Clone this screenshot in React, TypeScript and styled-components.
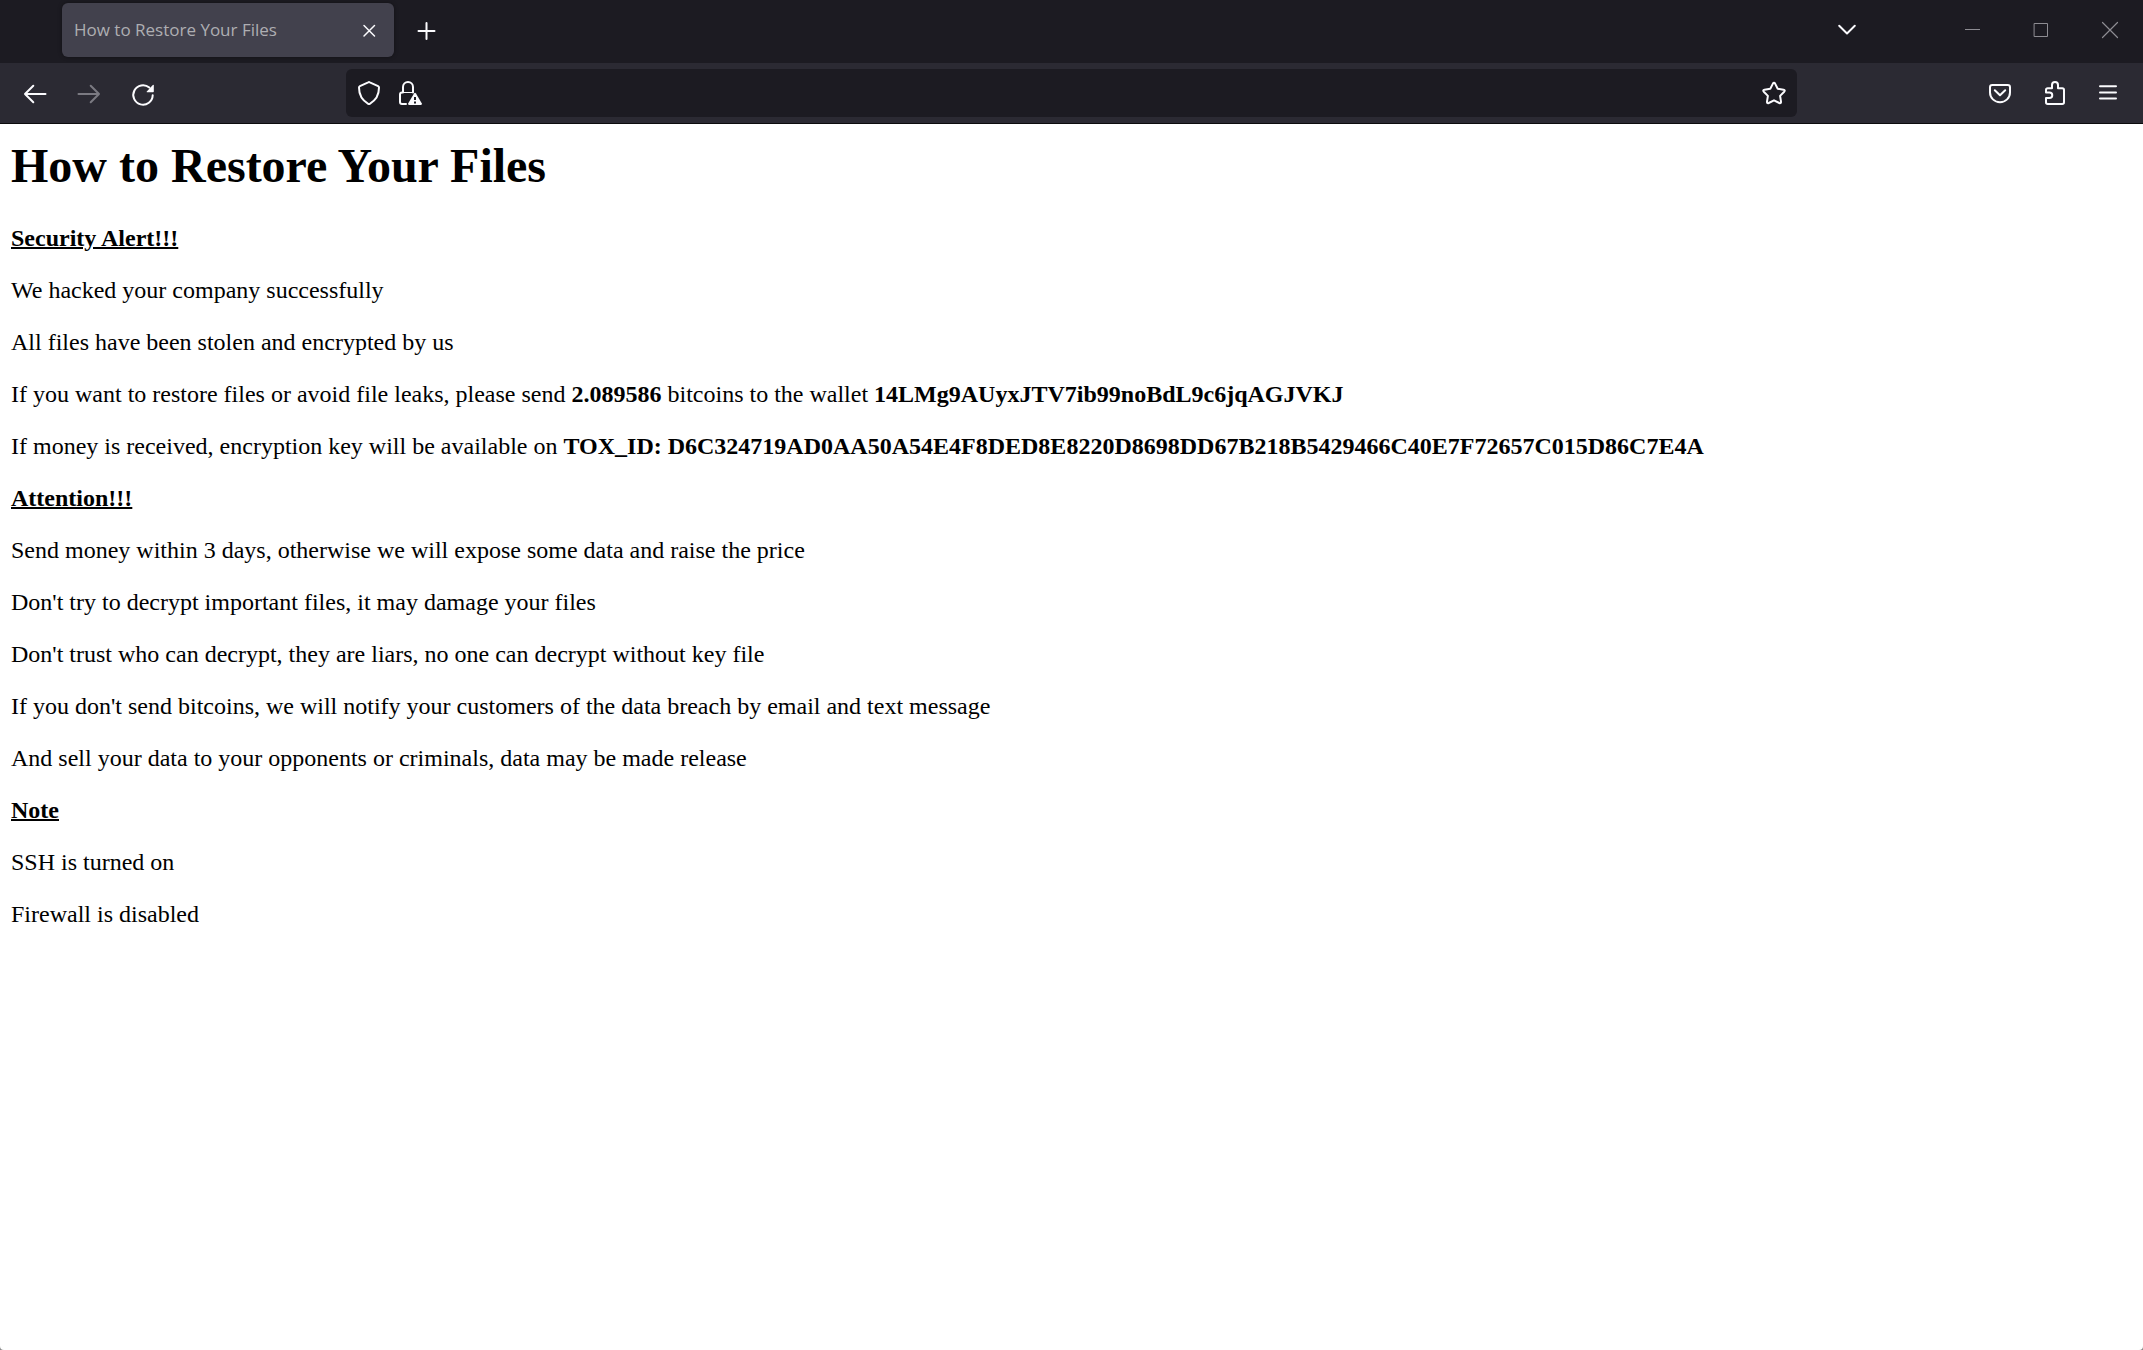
import React from "react";
import styled, { createGlobalStyle } from "styled-components";

const GlobalStyle = createGlobalStyle`
  html {
    background: #8a8a8a;
  }
  body {
    margin: 0;
  }
  *, *::before, *::after {
    box-sizing: border-box;
  }
`;

const Window = styled.div`
  display: flex;
  flex-direction: column;
  min-height: 100vh;
  background: #ffffff;
  border-radius: 0 0 4px 4px;
  overflow: hidden;
`;

const TabStrip = styled.header`
  display: flex;
  align-items: center;
  padding: 3px 0 6px 62px;
  background: #1c1b22;
`;

const Tab = styled.div`
  display: flex;
  align-items: center;
  flex: 0 1 332px;
  min-width: 0;
  height: 54px;
  padding: 0 6px 0 12px;
  border-radius: 6px;
  background: #42414d;
  box-shadow: 0 0 4px rgba(0, 0, 0, 0.4);
`;

const TabTitle = styled.span`
  flex: 1;
  min-width: 0;
  overflow: hidden;
  white-space: nowrap;
  font: 17px/28px "Open Sans", "Noto Sans", sans-serif;
  color: #aeaeb2;
`;

const IconButton = styled.button<{ $width: number; $color?: string }>`
  display: flex;
  flex: none;
  align-items: center;
  justify-content: center;
  width: ${(p) => p.$width}px;
  height: 36px;
  padding: 0;
  border: 0;
  background: transparent;
  color: ${(p) => p.$color ?? "#fbfbfe"};
`;

const Icon = styled.svg`
  display: block;
  width: 24px;
  height: 24px;
  overflow: visible;
  fill: none;
  stroke: currentColor;
  stroke-width: 2;
  stroke-linecap: round;
  stroke-linejoin: round;
`;

const NewTab = styled.div`
  flex: 1;
  padding-left: 6px;
`;

const WindowControls = styled.div`
  display: flex;
  padding-left: 65px;
`;

const Toolbar = styled.nav`
  display: flex;
  align-items: center;
  padding: 6px 8px;
  border-bottom: 1px solid #0c0c0d;
  background: #2b2a33;
`;

const Spacer = styled.div`
  flex: 0 1 176px;
`;

const AddressBar = styled.div`
  display: flex;
  flex: 1;
  align-items: center;
  min-width: 0;
  height: 48px;
  padding: 0 2px;
  border-radius: 6px;
  background: #1c1b22;
`;

const AddressInput = styled.input`
  flex: 1;
  min-width: 0;
  height: 36px;
  padding: 0 8px;
  border: 0;
  outline: 0;
  background: transparent;
  font: 17px/28px "Open Sans", "Noto Sans", sans-serif;
  color: #fbfbfe;
`;

const Page = styled.main`
  flex: 1;
  padding: 14px 11px 24px;
  font: 24px/28px "Liberation Serif", "Times New Roman", serif;
  color: #000000;
`;

const Title = styled.h1`
  margin: 0 0 30px;
  font-size: 48px;
  line-height: 56px;
  font-weight: bold;
`;

const Line = styled.p`
  margin: 0 0 24px;
  overflow-wrap: anywhere;
`;

const SectionTitle = styled.h2`
  margin: 0 0 24px;
  font-size: 24px;
  line-height: 28px;
  font-weight: bold;
  text-decoration: underline;
  text-decoration-thickness: 2px;
`;

const DIM = "#8d8c92";

export default function App() {
  return (
    <>
      <GlobalStyle />
      <Window>
        <TabStrip>
          <Tab>
            <TabTitle>How to Restore Your Files</TabTitle>
            <IconButton $width={36} aria-label="Close tab">
              <Icon>
                <path d="M6 7.5l10.500 10.500M16.500 7.500l-10.500 10.500" strokeWidth="1.500" />
              </Icon>
            </IconButton>
          </Tab>
          <NewTab>
            <IconButton $width={54} aria-label="New tab">
              <Icon>
                <path d="M11.500 5v16M3.500 13h16" />
              </Icon>
            </IconButton>
          </NewTab>
          <IconButton $width={54} aria-label="List all tabs">
            <Icon>
              <path d="M4.200 7.800l7.800 7.700 7.800-7.700" />
            </Icon>
          </IconButton>
          <WindowControls>
            <IconButton $width={68} $color={DIM} aria-label="Minimize">
              <Icon>
                <path d="M4 11.500h15" strokeWidth="1" strokeLinecap="butt" />
              </Icon>
            </IconButton>
            <IconButton $width={68} $color={DIM} aria-label="Maximize">
              <Icon>
                <path d="M5.500 5.500h13v13h-13z" strokeWidth="1" strokeLinejoin="miter" />
              </Icon>
            </IconButton>
            <IconButton $width={68} $color={DIM} aria-label="Close window">
              <Icon>
                <path d="M5.500 4.500l15 15M20.500 4.500l-15 15" strokeWidth="1.200" />
              </Icon>
            </IconButton>
          </WindowControls>
        </TabStrip>

        <Toolbar aria-label="Navigation">
          <IconButton $width={54} aria-label="Back">
            <Icon>
              <path d="M10.300 4.800L2 13l8.300 8.200M2 13h20.500" />
            </Icon>
          </IconButton>
          <IconButton $width={54} $color="#7b7a82" aria-label="Forward" disabled>
            <Icon>
              <path d="M13.700 4.800L22 13l-8.300 8.200M22 13H1.500" />
            </Icon>
          </IconButton>
          <IconButton $width={54} aria-label="Reload">
            <Icon>
              <path d="M21.700 14.200a9.700 9.700 0 1 1-3.400-7.600" />
              <path
                d="M22.800 4.300v6.200q0 .7-.7.7h-6q-1 0-.3-.8l6-6.400q.8-.7 1 .3z"
                fill="currentColor"
                stroke="none"
              />
            </Icon>
          </IconButton>
          <Spacer />
          <AddressBar>
            <IconButton $width={42} aria-label="Tracking protection">
              <Icon>
                <path d="M11.200 1.300q.8-.4 1.600 0l8.300 3.900q.9.4.9 1.400c0 7.600-3.800 13.200-9.200 16.200q-.8.4-1.600 0C5.800 19.800 2 14.200 2 6.600q0-1 .9-1.400z" />
              </Icon>
            </IconButton>
            <IconButton $width={42} aria-label="Connection is not secure">
              <Icon>
                <path d="M4 11.500V6a5 5 0 0 1 10 0v5.500" />
                <path d="M3 11.500h11" strokeWidth="1.200" />
                <path d="M3 11.500q-2 0-2 2V21q0 2 2 2h4" />
                <path
                  d="M15 12.500q1-1.600 2 0l5.700 9.700q.8 1.600-.9 1.800H10.200q-1.700-.2-.9-1.800z"
                  fill="currentColor"
                  stroke="none"
                />
                <path d="M16 16v3M16 20.500v2" stroke="#1c1b22" strokeWidth="2" strokeLinecap="butt" />
              </Icon>
            </IconButton>
            <AddressInput type="text" aria-label="Search or enter address" />
            <IconButton $width={42} aria-label="Bookmark this page">
              <Icon>
                <path d="M10.900 2.600q1.100-1.900 2.200 0l2.600 5.200 5.800.9q2 .5.7 2l-4.100 4.200.9 5.800q.1 2-1.700 1.300L12 19.300 6.700 22q-1.800.7-1.700-1.300l.9-5.800-4.100-4.200q-1.300-1.500.7-2l5.800-.9z" />
              </Icon>
            </IconButton>
          </AddressBar>
          <Spacer />
          <IconButton $width={54} aria-label="Save to Pocket">
            <Icon>
              <path d="M4.300 4h15.400q2.300 0 2.300 2.300V11.500a10 9.700 0 0 1-20 0V6.300Q2 4 4.300 4z" />
              <path d="M6.800 9.300l5.200 5 5.200-5" />
            </Icon>
          </IconButton>
          <IconButton $width={54} aria-label="Extensions">
            <Icon>
              <path d="M4 11.500V9q0-1.700 1.700-1.700H10V4a3 3 0 0 1 6 0v3.300h4.300q1.700 0 1.700 1.700v12.300q0 1.700-1.700 1.700H5.700Q4 23 4 21.300V17h3.500a2.700 2.700 0 0 0 0-5.500z" />
            </Icon>
          </IconButton>
          <IconButton $width={54} aria-label="Open application menu">
            <Icon>
              <path d="M4 5.300h16M4 11.500h16M4 17.600h16" />
            </Icon>
          </IconButton>
        </Toolbar>

        <Page>
          <Title>How to Restore Your Files</Title>
          <SectionTitle>Security Alert!!!</SectionTitle>
          <Line>We hacked your company successfully</Line>
          <Line>All files have been stolen and encrypted by us</Line>
          <Line>
            If you want to restore files or avoid file leaks, please send <b>2.089586</b> bitcoins to the
            wallet <b>14LMg9AUyxJTV7ib99noBdL9c6jqAGJVKJ</b>
          </Line>
          <Line>
            If money is received, encryption key will be available on{" "}
            <b>TOX_ID: D6C324719AD0AA50A54E4F8DED8E8220D8698DD67B218B5429466C40E7F72657C015D86C7E4A</b>
          </Line>
          <SectionTitle>Attention!!!</SectionTitle>
          <Line>Send money within 3 days, otherwise we will expose some data and raise the price</Line>
          <Line>Don't try to decrypt important files, it may damage your files</Line>
          <Line>Don't trust who can decrypt, they are liars, no one can decrypt without key file</Line>
          <Line>
            If you don't send bitcoins, we will notify your customers of the data breach by email and text
            message
          </Line>
          <Line>And sell your data to your opponents or criminals, data may be made release</Line>
          <SectionTitle>Note</SectionTitle>
          <Line>SSH is turned on</Line>
          <Line>Firewall is disabled</Line>
        </Page>
      </Window>
    </>
  );
}
